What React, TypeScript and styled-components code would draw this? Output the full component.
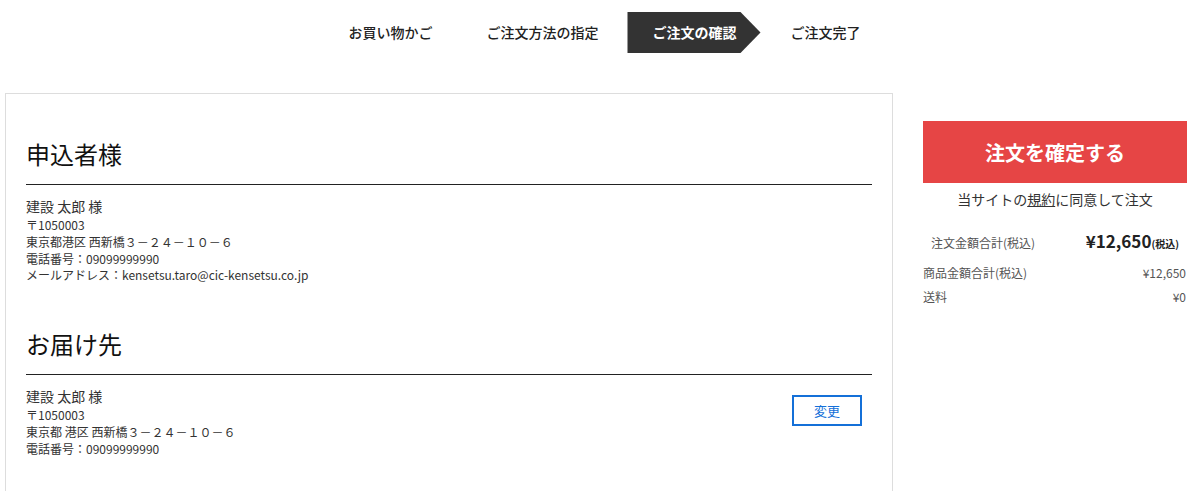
import styled, { createGlobalStyle } from 'styled-components';

const GlobalStyle = createGlobalStyle`
  html, body {
    margin: 0;
    padding: 0;
    background: #fff;
    color: #333;
    font-family: "Noto Sans CJK JP", "Noto Sans", sans-serif;
  }
`;

const Steps = styled.ol`
  display: flex;
  justify-content: center;
  list-style: none;
  margin: 0;
  padding: 12px 0 0 8px;
`;

const Step = styled.li<{ $active?: boolean }>`
  height: 41px;
  line-height: 41px;
  padding: 0 27px;
  font-size: 14px;
  font-weight: ${(p) => (p.$active ? 700 : 500)};
  color: ${(p) => (p.$active ? '#fff' : '#222')};
  background: ${(p) => (p.$active ? '#333' : 'transparent')};
  clip-path: ${(p) =>
    p.$active
      ? 'polygon(2px 0, calc(100% - 23px) 0, calc(100% - 3px) 50%, calc(100% - 23px) 100%, 2px 100%)'
      : 'none'};
`;

const Main = styled.div`
  display: flex;
  align-items: flex-start;
  gap: 30px;
  padding: 40px 0 0 5px;
`;

const Panel = styled.div`
  width: 846px;
  min-height: 420px;
  border: 1px solid #ddd;
  border-bottom: none;
  padding: 0 20px;
`;

const Section = styled.section`
  padding-top: 42px;
`;

const Heading = styled.h2`
  margin: 0;
  font-size: 24px;
  line-height: 36px;
  font-weight: 400;
  color: #111;
  padding-bottom: 12px;
  border-bottom: 1px solid #222;
`;

const InfoRow = styled.div`
  display: flex;
  justify-content: space-between;
  align-items: flex-start;
  padding-top: 11px;
`;

const Info = styled.div`
  font-size: 12px;
  line-height: 16.8px;
  color: #333;
`;

const Name = styled.div`
  font-size: 14px;
  line-height: 21px;
`;

const ChangeButton = styled.button`
  box-sizing: border-box;
  width: 70px;
  height: 31px;
  margin: 9px 10px 0 0;
  border: 2px solid #1470d8;
  background: #fff;
  color: #1470d8;
  font-family: inherit;
  font-size: 13px;
  cursor: pointer;
`;

const Side = styled.aside`
  width: 264px;
  margin-top: 28px;
`;

const ConfirmButton = styled.button`
  display: block;
  width: 100%;
  height: 62px;
  border: none;
  background: #e64545;
  color: #fff;
  font-family: inherit;
  font-size: 20px;
  font-weight: 700;
  cursor: pointer;
`;

const Agree = styled.p`
  margin: 6px 0 0;
  text-align: center;
  font-size: 14px;
  line-height: 20px;
  color: #333;

  a {
    color: inherit;
    text-decoration: underline;
  }
`;

const Totals = styled.div`
  margin-top: 12px;
  color: #555;
`;

const GrandRow = styled.div`
  display: flex;
  justify-content: space-between;
  align-items: baseline;
  padding: 8px 8px 5px;
  line-height: 24px;
  font-size: 12px;
`;

const Grand = styled.span`
  color: #222;
  font-size: 17px;
  font-weight: 700;

  small {
    font-size: 10px;
  }
`;

const Row = styled.div`
  display: flex;
  justify-content: space-between;
  padding-right: 1px;
  font-size: 12px;
  line-height: 24px;
`;

const steps = ['お買い物かご', 'ご注文方法の指定', 'ご注文の確認', 'ご注文完了'];

export default function App() {
  return (
    <>
      <GlobalStyle />
      <Steps>
        {steps.map((s, i) => (
          <Step key={s} $active={i === 2}>
            {s}
          </Step>
        ))}
      </Steps>
      <Main>
        <Panel>
          <Section>
            <Heading>申込者様</Heading>
            <InfoRow>
              <Info>
                <Name>建設 太郎 様</Name>
                <div>〒1050003</div>
                <div>東京都港区 西新橋３－２４－１０－６</div>
                <div>電話番号：09099999990</div>
                <div>メールアドレス：kensetsu.taro@cic-kensetsu.co.jp</div>
              </Info>
            </InfoRow>
          </Section>
          <Section>
            <Heading>お届け先</Heading>
            <InfoRow>
              <Info>
                <Name>建設 太郎 様</Name>
                <div>〒1050003</div>
                <div>東京都 港区 西新橋３－２４－１０－６</div>
                <div>電話番号：09099999990</div>
              </Info>
              <ChangeButton>変更</ChangeButton>
            </InfoRow>
          </Section>
        </Panel>
        <Side>
          <ConfirmButton>注文を確定する</ConfirmButton>
          <Agree>
            当サイトの<a>規約</a>に同意して注文
          </Agree>
          <Totals>
            <GrandRow>
              <span>注文金額合計(税込)</span>
              <Grand>
                ¥12,650<small>(税込)</small>
              </Grand>
            </GrandRow>
            <Row>
              <span>商品金額合計(税込)</span>
              <span>¥12,650</span>
            </Row>
            <Row>
              <span>送料</span>
              <span>¥0</span>
            </Row>
          </Totals>
        </Side>
      </Main>
    </>
  );
}
